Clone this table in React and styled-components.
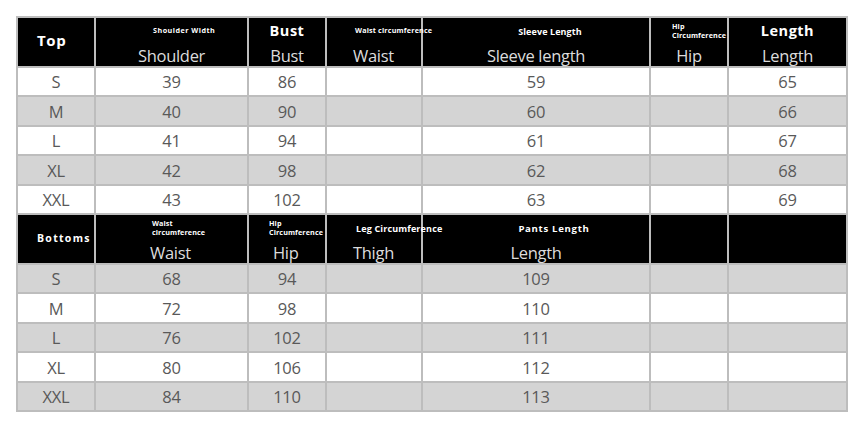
import React from 'react';
import styled, { createGlobalStyle } from 'styled-components';

const Global = createGlobalStyle`
  html, body { margin: 0; padding: 0; background: #fff; }
  body { font-family: "Open Sans", "Liberation Sans", sans-serif; }
`;

const Page = styled.div`
  padding: 16px 0 0 16px;
`;

const Table = styled.div`
  display: grid;
  box-sizing: border-box;
  width: 832px;
  grid-template-columns: 76px 151px 76px 94px 226px 76px 117px;
  grid-template-rows: 48px 27px 28px 27px 28px 27px 48px 27px 28px 27px 28px 27px;
  gap: 2px;
  padding: 2px;
  background: #bdbdbd;
`;

const HeadCell = styled.div`
  background: #000;
  display: grid;
  grid-template-rows: 26px 1fr;
  min-width: 0;
`;

const TitleCell = styled.div`
  background: #000;
  display: flex;
  align-items: center;
  padding-left: 19px;
  padding-bottom: ${(p) => p.$lift || 0}px;
`;

const Title = styled.span`
  color: #fff;
  font-weight: 700;
  font-size: ${(p) => (p.$small ? '10.5px' : '15px')};
  letter-spacing: ${(p) => (p.$small ? '1.3px' : '0.6px')};
`;

const captionSizes = {
  tiny: { size: '7.2px', lh: '9.5px' },
  small: { size: '9px', lh: '11px' },
  large: { size: '14.5px', lh: '18px' },
};

const Caption = styled.div`
  display: flex;
  align-items: center;
  justify-content: ${(p) => (p.$align === 'left' ? 'flex-start' : 'center')};
  padding-left: ${(p) => p.$indent || 0}px;
  color: #fff;
  font-weight: 700;
  white-space: nowrap;
  font-size: ${(p) => p.$fs || captionSizes[p.$size].size};
  letter-spacing: ${(p) => p.$ls}px;
  line-height: ${(p) => captionSizes[p.$size].lh};
  position: relative;
  z-index: 1;
`;

const Label = styled.div`
  display: flex;
  align-items: center;
  justify-content: ${(p) => (p.$align === 'left' ? 'flex-start' : 'center')};
  padding-left: ${(p) => p.$indent || 0}px;
  padding-bottom: 1px;
  color: #dcdcdc;
  font-size: 16.5px;
  letter-spacing: -0.3px;
  white-space: nowrap;
`;

const Cell = styled.div`
  background: ${(p) => (p.$shade ? '#d4d4d4' : '#fff')};
  color: #595959;
  font-size: 16.5px;
  letter-spacing: -0.2px;
  display: flex;
  align-items: center;
  justify-content: center;
`;

const topHeader = [
  { caption: ['Shoulder Width'], size: 'tiny', ls: 0.48, cAlign: 'left', cIndent: 57, label: 'Shoulder' },
  { caption: ['Bust'], size: 'large', ls: 0.5, label: 'Bust' },
  { caption: ['Waist circumference'], size: 'tiny', ls: 0.18, cAlign: 'left', cIndent: 28, label: 'Waist', lAlign: 'left', lIndent: 26 },
  { caption: ['Sleeve Length'], size: 'small', ls: 0.1, cIndent: 28, label: 'Sleeve length' },
  { caption: ['Hip', 'Circumference'], size: 'tiny', ls: 0.1, cAlign: 'left', cIndent: 21, label: 'Hip' },
  { caption: ['Length'], size: 'large', ls: 0.5, label: 'Length' },
];

const bottomHeader = [
  { caption: ['Waist', 'circumference'], size: 'tiny', ls: 0.1, cAlign: 'left', cIndent: 56, label: 'Waist', lAlign: 'left', lIndent: 54 },
  { caption: ['Hip', 'Circumference'], size: 'tiny', ls: 0.1, cAlign: 'left', cIndent: 20, label: 'Hip', lAlign: 'left', lIndent: 24 },
  { caption: ['Leg Circumference'], size: 'small', ls: 0.15, cAlign: 'left', cIndent: 29, label: 'Thigh', lAlign: 'left', lIndent: 26 },
  { caption: ['Pants Length'], size: 'small', fs: '9.6px', ls: 0.7, cIndent: 36, label: 'Length' },
  { caption: [], size: 'tiny', ls: 0, label: '' },
  { caption: [], size: 'tiny', ls: 0, label: '' },
];

const topRows = [
  ['S', '39', '86', '', '59', '', '65'],
  ['M', '40', '90', '', '60', '', '66'],
  ['L', '41', '94', '', '61', '', '67'],
  ['XL', '42', '98', '', '62', '', '68'],
  ['XXL', '43', '102', '', '63', '', '69'],
];

const bottomRows = [
  ['S', '68', '94', '', '109', '', ''],
  ['M', '72', '98', '', '110', '', ''],
  ['L', '76', '102', '', '111', '', ''],
  ['XL', '80', '106', '', '112', '', ''],
  ['XXL', '84', '110', '', '113', '', ''],
];

function Header({ title, small, lift, cols }) {
  return (
    <>
      <TitleCell $lift={lift}>
        <Title $small={small}>{title}</Title>
      </TitleCell>
      {cols.map((c, i) => (
        <HeadCell key={i}>
          <Caption $size={c.size} $fs={c.fs} $ls={c.ls} $align={c.cAlign} $indent={c.cIndent}>
            <span>
              {c.caption.map((line, j) => (
                <React.Fragment key={j}>
                  {j > 0 && <br />}
                  {line}
                </React.Fragment>
              ))}
            </span>
          </Caption>
          <Label $align={c.lAlign} $indent={c.lIndent}>{c.label}</Label>
        </HeadCell>
      ))}
    </>
  );
}

function Rows({ rows, greyFirst }) {
  return rows.map((r, i) => {
    const shade = greyFirst ? i % 2 === 0 : i % 2 === 1;
    return r.map((v, j) => (
      <Cell key={`${i}-${j}`} $shade={shade}>{v}</Cell>
    ));
  });
}

export default function App() {
  return (
    <>
      <Global />
      <Page>
        <Table>
          <Header title="Top" lift={4} cols={topHeader} />
          <Rows rows={topRows} greyFirst={false} />
          <Header title="Bottoms" small lift={3} cols={bottomHeader} />
          <Rows rows={bottomRows} greyFirst />
        </Table>
      </Page>
    </>
  );
}
